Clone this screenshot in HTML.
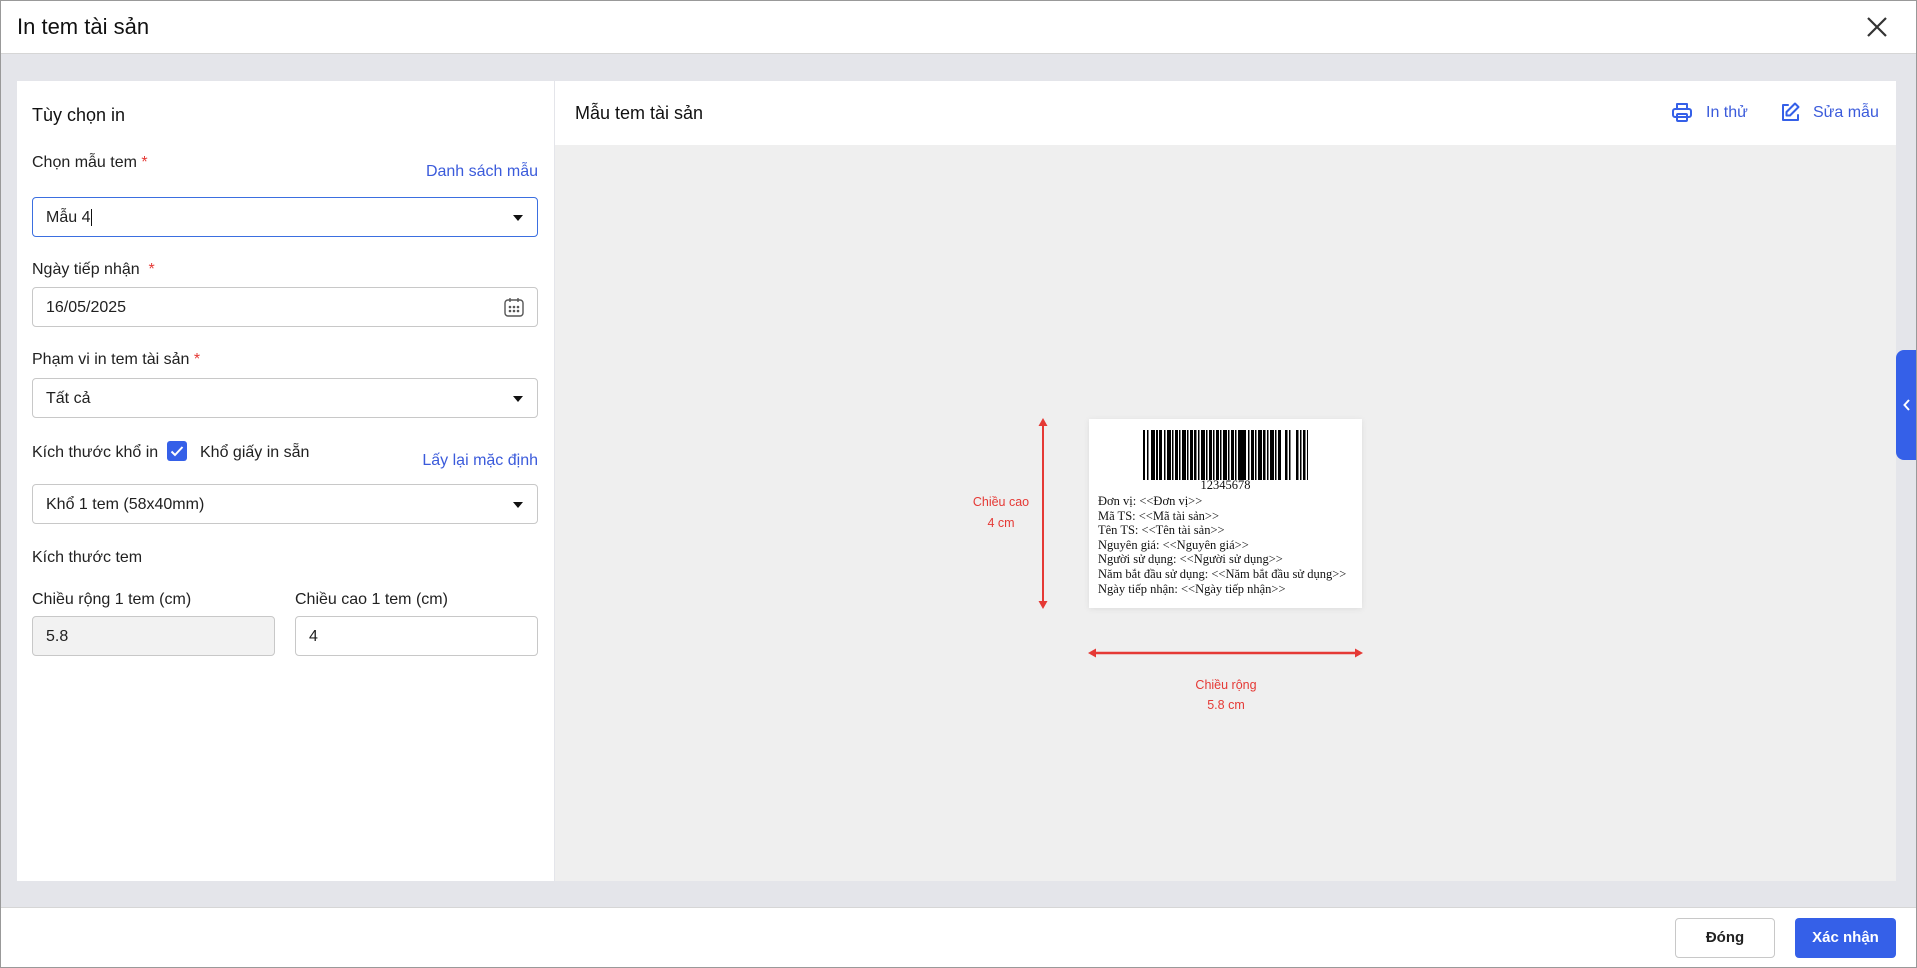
<!DOCTYPE html>
<html><head><meta charset="utf-8"><style>
*{box-sizing:border-box;margin:0;padding:0}
body{width:1917px;height:968px;position:relative;overflow:hidden;font-family:"Liberation Sans",Arial,sans-serif;color:#212121;background:#e4e5ea}
.a{position:absolute}
.hdr{left:0;top:0;width:1917px;height:54px;background:#fff;border-bottom:1px solid #d6d6d6}
.lbl{font-size:16px;color:#212121;white-space:nowrap}
.req{color:#e53935}
.link{font-size:16px;color:#3b5bdb;white-space:nowrap}
.inp{left:32px;width:506px;height:40px;border:1px solid #c8c8c8;border-radius:4px;background:#fff;font-size:16px;padding:0 0 0 13px;line-height:40px}
.caret{position:absolute;right:14px;top:17px;width:0;height:0;border-left:5px solid transparent;border-right:5px solid transparent;border-top:6px solid #111}
.lt{font-family:"Liberation Serif",serif;font-size:12.5px;color:#111;line-height:14.6px;white-space:nowrap}
.red{color:#e53935;font-size:12.5px;text-align:center;white-space:nowrap}
</style></head><body>
<div class="a" style="left:0;top:0;width:1917px;height:968px;border:1px solid #999;z-index:5;pointer-events:none"></div>
<div class="a hdr"></div>
<div class="a" style="left:17px;top:14px;font-size:22px;color:#111">In tem tài sản</div>
<svg class="a" style="left:1866px;top:16px" width="22" height="22" viewBox="0 0 22 22"><path d="M2 2L20 20M20 2L2 20" stroke="#333" stroke-width="2.2"/></svg>

<!-- left panel -->
<div class="a" style="left:17px;top:81px;width:537px;height:800px;background:#fff"></div>
<div class="a" style="left:32px;top:105px;font-size:18px;color:#111">Tùy chọn in</div>
<div class="a lbl" style="left:32px;top:154px">Chọn mẫu tem <span class="req">*</span></div>
<div class="a link" style="right:1379px;top:163px">Danh sách mẫu</div>
<div class="a inp" style="top:197px;border-color:#3b6fe0">Mẫu 4<span style="border-left:1px solid #111;margin-left:1px"></span><div class="caret"></div></div>
<div class="a lbl" style="left:32px;top:261px">Ngày tiếp nhận&nbsp; <span class="req">*</span></div>
<div class="a inp" style="top:287px">16/05/2025
<svg class="a" style="right:12px;top:8px" width="22" height="22" viewBox="0 0 22 22" fill="none" stroke="#555" stroke-width="1.4"><rect x="2" y="4" width="18" height="16" rx="3"/><path d="M7 2v4M15 2v4"/><circle cx="7" cy="11" r=".6" fill="#555"/><circle cx="11" cy="11" r=".6" fill="#555"/><circle cx="15" cy="11" r=".6" fill="#555"/><circle cx="7" cy="15" r=".6" fill="#555"/><circle cx="11" cy="15" r=".6" fill="#555"/><circle cx="15" cy="15" r=".6" fill="#555"/></svg></div>
<div class="a lbl" style="left:32px;top:351px">Phạm vi in tem tài sản <span class="req">*</span></div>
<div class="a inp" style="top:378px">Tất cả<div class="caret"></div></div>
<div class="a lbl" style="left:32px;top:444px">Kích thước khổ in</div>
<div class="a" style="left:167px;top:441px;width:20px;height:20px;background:#3560e8;border-radius:3px"><svg width="20" height="20" viewBox="0 0 20 20"><path d="M4.5 10.5l3.5 3.5 7.5-8" stroke="#fff" stroke-width="2" fill="none"/></svg></div>
<div class="a lbl" style="left:200px;top:444px">Khổ giấy in sẵn</div>
<div class="a link" style="right:1379px;top:452px">Lấy lại mặc định</div>
<div class="a inp" style="top:484px">Khổ 1 tem (58x40mm)<div class="caret"></div></div>
<div class="a lbl" style="left:32px;top:549px">Kích thước tem</div>
<div class="a lbl" style="left:32px;top:591px">Chiều rộng 1 tem (cm)</div>
<div class="a lbl" style="left:295px;top:591px">Chiều cao 1 tem (cm)</div>
<div class="a inp" style="top:616px;width:243px;background:#f2f2f2">5.8</div>
<div class="a inp" style="top:616px;left:295px;width:243px">4</div>

<!-- right panel -->
<div class="a" style="left:555px;top:81px;width:1341px;height:64px;background:#fff"></div>
<div class="a" style="left:555px;top:145px;width:1341px;height:736px;background:#efefef"></div>
<div class="a" style="left:575px;top:103px;font-size:18px;color:#111">Mẫu tem tài sản</div>
<svg class="a" style="left:1671px;top:101px" width="22" height="22" viewBox="0 0 22 22" fill="none" stroke="#3560e8" stroke-width="2" stroke-linejoin="round"><path d="M6 8V3h10v5"/><rect x="2" y="8" width="18" height="8" rx="2"/><rect x="6" y="13" width="10" height="7" rx="1"/></svg>
<div class="a link" style="left:1706px;top:104px">In thử</div>
<svg class="a" style="left:1779px;top:101px" width="22" height="22" viewBox="0 0 22 22" fill="none" stroke="#3560e8" stroke-width="2" stroke-linejoin="round" stroke-linecap="round"><path d="M9 4H4v15h15v-5"/><path d="M16 2.5l3.5 3.5L11 14.5H7.5V11z"/></svg>
<div class="a link" style="left:1813px;top:104px">Sửa mẫu</div>

<!-- label -->
<div class="a" style="left:1089px;top:419px;width:273px;height:189px;background:#fff;box-shadow:0 1px 6px rgba(0,0,0,.08)"></div>
<svg class="a" style="left:1143px;top:430px" width="165" height="50" viewBox="0 0 165 50"><g fill="#000">
<rect x="0" y="0" width="2" height="50"/><rect x="4" y="0" width="1.5" height="50"/><rect x="8" y="0" width="4" height="50"/><rect x="13" y="0" width="2" height="50"/><rect x="16" y="0" width="3" height="50"/><rect x="21" y="0" width="1.5" height="50"/><rect x="24" y="0" width="4" height="50"/><rect x="29" y="0" width="1.5" height="50"/><rect x="32" y="0" width="3" height="50"/><rect x="36" y="0" width="1.5" height="50"/><rect x="39" y="0" width="4" height="50"/><rect x="44" y="0" width="1.5" height="50"/><rect x="47" y="0" width="3" height="50"/><rect x="51" y="0" width="2.5" height="50"/><rect x="55" y="0" width="1.5" height="50"/><rect x="58" y="0" width="4" height="50"/><rect x="63" y="0" width="1.5" height="50"/><rect x="66" y="0" width="3" height="50"/><rect x="70" y="0" width="1.5" height="50"/><rect x="73" y="0" width="3" height="50"/><rect x="77" y="0" width="1.5" height="50"/><rect x="80" y="0" width="4" height="50"/><rect x="85" y="0" width="1.5" height="50"/><rect x="88" y="0" width="3" height="50"/><rect x="92" y="0" width="1.5" height="50"/><rect x="95" y="0" width="8" height="50"/><rect x="105" y="0" width="1.5" height="50"/><rect x="108" y="0" width="3" height="50"/><rect x="112" y="0" width="1.5" height="50"/><rect x="115" y="0" width="4" height="50"/><rect x="120" y="0" width="2.5" height="50"/><rect x="124" y="0" width="1.5" height="50"/><rect x="127" y="0" width="4" height="50"/><rect x="132" y="0" width="1.5" height="50"/><rect x="135" y="0" width="3" height="50"/><rect x="142" y="0" width="2.5" height="50"/><rect x="146" y="0" width="1.5" height="50"/><rect x="153" y="0" width="2.5" height="50"/><rect x="157" y="0" width="1.5" height="50"/><rect x="160" y="0" width="2.5" height="50"/><rect x="164" y="0" width="1" height="50"/></g></svg>
<div class="a lt" style="left:1143px;width:165px;top:478px;text-align:center">12345678</div>
<div class="a lt" style="left:1098px;top:494px">Đơn vị: &lt;&lt;Đơn vị&gt;&gt;<br>Mã TS: &lt;&lt;Mã tài sản&gt;&gt;<br>Tên TS: &lt;&lt;Tên tài sản&gt;&gt;<br>Nguyên giá: &lt;&lt;Nguyên giá&gt;&gt;<br>Người sử dụng: &lt;&lt;Người sử dụng&gt;&gt;<br>Năm bắt đầu sử dụng: &lt;&lt;Năm bắt đầu sử dụng&gt;&gt;<br>Ngày tiếp nhận: &lt;&lt;Ngày tiếp nhận&gt;&gt;</div>

<svg class="a" style="left:1035px;top:417px" width="16" height="193" viewBox="0 0 16 193"><path d="M8 6V187" stroke="#e53935" stroke-width="2"/><path d="M8 1L3.5 9h9zM8 192l-4.5-8h9z" fill="#e53935"/></svg>
<div class="a red" style="left:961px;width:80px;top:495px">Chiều cao</div>
<div class="a red" style="left:961px;width:80px;top:516px">4 cm</div>
<svg class="a" style="left:1087px;top:645px" width="277" height="16" viewBox="0 0 277 16"><path d="M6 8H271" stroke="#e53935" stroke-width="2.4"/><path d="M1 8l8-4.5v9zM276 8l-8-4.5v9z" fill="#e53935"/></svg>
<div class="a red" style="left:1176px;width:100px;top:678px">Chiều rộng</div>
<div class="a red" style="left:1176px;width:100px;top:698px">5.8 cm</div>

<!-- side tab -->
<div class="a" style="left:1896px;top:350px;width:24px;height:110px;background:#3560e8;border-radius:8px 0 0 8px"><svg style="position:absolute;left:7px;top:49px" width="8" height="12" viewBox="0 0 8 12"><path d="M6 1L1.5 6 6 11" stroke="#fff" stroke-width="2" fill="none"/></svg></div>

<!-- footer -->
<div class="a" style="left:0;top:907px;width:1917px;height:61px;background:#fff;border-top:1px solid #d6d6d6"></div>
<div class="a" style="left:1675px;top:918px;width:100px;height:40px;border:1px solid #c8c8c8;border-radius:4px;background:#fff;font-size:15px;font-weight:bold;text-align:center;line-height:38px">Đóng</div>
<div class="a" style="left:1795px;top:918px;width:101px;height:40px;border-radius:4px;background:#3560e8;color:#fff;font-size:15px;font-weight:bold;text-align:center;line-height:40px">Xác nhận</div>
</body></html>
